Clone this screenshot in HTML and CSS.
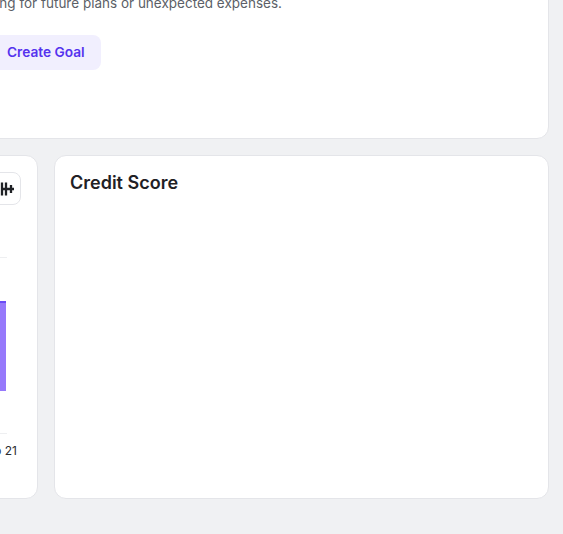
FILE: index.html
```html
<!DOCTYPE html>
<html lang="en">
<head>
<meta charset="utf-8">
<title>Dashboard</title>
<link rel="stylesheet" href="styles.css">
</head>
<body>
<div class="page">
  <section class="card goal-card">
    <p class="goal-text">saving for future plans or unexpected expenses.</p>
    <button class="btn-soft">Create Goal</button>
  </section>
  <div class="row">
    <section class="card chart-card">
      <div class="chart-head">
        <button class="icon-btn" aria-label="Add">
          <svg width="16" height="16" viewBox="0 0 16 16" fill="none" stroke="#1f2125" stroke-width="2.3" stroke-linecap="butt">
            <path d="M2 1.5v13M6 1.5v13M1 8h13M11 4v8"/>
          </svg>
        </button>
      </div>
      <div class="chart">
        <div class="bar-col"><div class="bar" style="height:90px"></div></div>
      </div>
      <div class="labels"><span>Sep 21</span></div>
    </section>
    <section class="card score-card">
      <h2 class="card-title">Credit Score</h2>
    </section>
  </div>
</div>
</body>
</html>
```

FILE: styles.css
```css
* { box-sizing: border-box; }
html, body { margin: 0; }
body {
  background: #f0f1f3;
  font-family: Inter, "Noto Sans", "Liberation Sans", sans-serif;
  color: #1f2125;
  overflow: hidden;
}
.page {
  margin: -32px 14px 0 -34px;
  padding-bottom: 36px;
  display: flex;
  flex-direction: column;
  gap: 16px;
}
.card {
  background: #fff;
  border: 1px solid #e4e5e9;
  border-radius: 12px;
}
.goal-card {
  padding: 24px 24px 68px;
}
.goal-text {
  margin: 0 0 22px -17px;
  font-size: 13.5px;
  line-height: 20px;
  color: #5c5f67;
  white-space: nowrap;
}
.btn-soft {
  border: none;
  background: #f1effe;
  color: #5533ee;
  font: 600 13.7px/19px Inter, "Noto Sans", sans-serif;
  padding: 8px 16px;
  border-radius: 8px;
}
.row {
  display: grid;
  grid-template-columns: 1fr 495px;
  gap: 16px;
}
.chart-card, .score-card {
  height: 344px;
  padding: 16px 16px 16px 15px;
}
.chart-card { overflow: hidden; }
.chart-head {
  display: flex;
  justify-content: flex-end;
}
.icon-btn {
  height: 33px;
  width: 34px;
  border: 1px solid #e4e5e9;
  border-radius: 8px;
  background: #fff;
  display: flex;
  align-items: center;
  justify-content: flex-end;
  padding: 0 4px 0 0;
}
.icon-btn svg { display: block; }
.chart {
  margin: 52px 14px 0 0;
  height: 177px;
  border-top: 1px solid #eeeff1;
  border-bottom: 1px solid #eeeff1;
  display: flex;
  justify-content: flex-end;
  align-items: flex-end;
  padding-bottom: 42px;
}
.bar-col { margin-right: 1px; }
.bar {
  width: 26px;
  background: #9679fb;
  border-top: 2px solid #6a4cf6;
}
.labels {
  margin-top: 9px;
  display: flex;
  justify-content: flex-end;
  padding-right: 4px;
  font-size: 12px;
  line-height: 16px;
  color: #2a2c31;
  white-space: nowrap;
}
.card-title {
  margin: 0;
  font-size: 18px;
  line-height: 22px;
  font-weight: 600;
  color: #1f2125;
}
```
